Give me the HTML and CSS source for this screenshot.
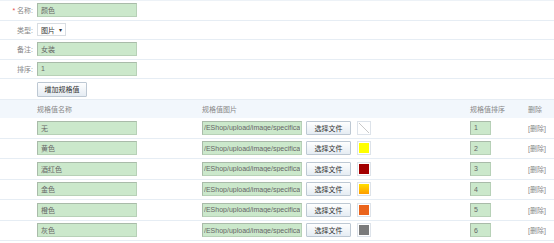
FILE: index.html
```html
<!DOCTYPE html>
<html lang="zh-CN">
<head>
    <meta charset="UTF-8">
    <title>编辑规格</title>
    <link rel="stylesheet" href="styles.css">
</head>
<body>

<div class="form">
    <div class="form-row">
        <label class="form-label"><span class="required">*</span> 名称:</label>
        <input class="text-input" type="text" value="颜色">
    </div>
    <div class="form-row">
        <label class="form-label">类型:</label>
        <span class="select">图片 <span class="caret">&#9662;</span></span>
    </div>
    <div class="form-row">
        <label class="form-label">备注:</label>
        <input class="text-input" type="text" value="女装">
    </div>
    <div class="form-row">
        <label class="form-label">排序:</label>
        <input class="text-input" type="text" value="1">
    </div>
    <div class="form-row button-row">
        <span class="form-label"></span>
        <button class="btn" type="button">增加规格值</button>
    </div>
</div>

<table class="spec-table">
    <colgroup>
        <col class="w-name">
        <col class="w-image">
        <col class="w-sort">
        <col class="w-del">
    </colgroup>
    <thead>
        <tr>
            <th class="col-name">规格值名称</th>
            <th>规格值图片</th>
            <th>规格值排序</th>
            <th>删除</th>
        </tr>
    </thead>
    <tbody>
        <tr>
            <td class="col-name"><input class="text-input" type="text" value="无"></td>
            <td>
                <div class="image-cell">
                    <input class="path-input" type="text" value="/EShop/upload/image/specification/none.gif">
                    <button class="file-btn" type="button">选择文件</button>
                    <span class="swatch"><span class="swatch-color swatch-none"></span></span>
                </div>
            </td>
            <td><input class="sort-input" type="text" value="1"></td>
            <td><span class="del-link">[删除]</span></td>
        </tr>
        <tr>
            <td class="col-name"><input class="text-input" type="text" value="黄色"></td>
            <td>
                <div class="image-cell">
                    <input class="path-input" type="text" value="/EShop/upload/image/specification/yellow.gif">
                    <button class="file-btn" type="button">选择文件</button>
                    <span class="swatch"><span class="swatch-color" style="background:#ffff00"></span></span>
                </div>
            </td>
            <td><input class="sort-input" type="text" value="2"></td>
            <td><span class="del-link">[删除]</span></td>
        </tr>
        <tr>
            <td class="col-name"><input class="text-input" type="text" value="酒红色"></td>
            <td>
                <div class="image-cell">
                    <input class="path-input" type="text" value="/EShop/upload/image/specification/wine.gif">
                    <button class="file-btn" type="button">选择文件</button>
                    <span class="swatch"><span class="swatch-color" style="background:#a30000"></span></span>
                </div>
            </td>
            <td><input class="sort-input" type="text" value="3"></td>
            <td><span class="del-link">[删除]</span></td>
        </tr>
        <tr>
            <td class="col-name"><input class="text-input" type="text" value="金色"></td>
            <td>
                <div class="image-cell">
                    <input class="path-input" type="text" value="/EShop/upload/image/specification/gold.gif">
                    <button class="file-btn" type="button">选择文件</button>
                    <span class="swatch"><span class="swatch-color swatch-gold"></span></span>
                </div>
            </td>
            <td><input class="sort-input" type="text" value="4"></td>
            <td><span class="del-link">[删除]</span></td>
        </tr>
        <tr>
            <td class="col-name"><input class="text-input" type="text" value="橙色"></td>
            <td>
                <div class="image-cell">
                    <input class="path-input" type="text" value="/EShop/upload/image/specification/orange.gif">
                    <button class="file-btn" type="button">选择文件</button>
                    <span class="swatch"><span class="swatch-color" style="background:#ea641c"></span></span>
                </div>
            </td>
            <td><input class="sort-input" type="text" value="5"></td>
            <td><span class="del-link">[删除]</span></td>
        </tr>
        <tr>
            <td class="col-name"><input class="text-input" type="text" value="灰色"></td>
            <td>
                <div class="image-cell">
                    <input class="path-input" type="text" value="/EShop/upload/image/specification/gray.gif">
                    <button class="file-btn" type="button">选择文件</button>
                    <span class="swatch"><span class="swatch-color" style="background:#7b7b7b"></span></span>
                </div>
            </td>
            <td><input class="sort-input" type="text" value="6"></td>
            <td><span class="del-link">[删除]</span></td>
        </tr>
    </tbody>
</table>

</body>
</html>
```

FILE: styles.css
```css
body {
    margin: 0;
    padding: 0;
    background-color: #fff;
    font-family: Arial, "Liberation Sans", "Noto Sans CJK SC", sans-serif;
    font-size: 7px;
    color: #666;
}
.form {
    border-top: 1px solid #edf2f7;
}
.form-row {
    display: flex;
    align-items: center;
    height: 18.5px;
    border-bottom: 1px solid #e6edf4;
}
.button-row {
    height: 20px;
}
.form-label {
    width: 33px;
    margin-right: 4px;
    text-align: right;
    color: #888;
    flex-shrink: 0;
}
.required {
    color: #e5504b;
}
.text-input,
.path-input,
.sort-input {
    box-sizing: border-box;
    height: 14px;
    margin: 0;
    padding: 0 3px;
    font: inherit;
    color: #666;
    background-color: #cbe8cb;
    border: 1px solid #b7d1b7;
    border-top-color: #a9bba9;
    border-left-color: #a9bba9;
    outline: none;
}
.text-input {
    width: 100px;
}
.select {
    box-sizing: border-box;
    display: inline-flex;
    align-items: center;
    justify-content: space-between;
    width: 29px;
    height: 13px;
    padding: 0 3px;
    border: 1px solid #d8dde2;
    background-color: #fff;
    color: #333;
}
.caret {
    font-size: 6px;
}
.btn,
.file-btn {
    box-sizing: border-box;
    margin: 0;
    padding: 0;
    font: inherit;
    color: #333;
    background: linear-gradient(#fefefe, #e5ecf3);
    border: 1px solid #bdc8d3;
    border-radius: 1px;
}
.btn {
    width: 50px;
    height: 15px;
}
.spec-table {
    width: 554px;
    table-layout: fixed;
    border-collapse: collapse;
}
.w-name {
    width: 202px;
}
.w-image {
    width: 268px;
}
.w-sort {
    width: 58px;
}
.w-del {
    width: 26px;
}
.spec-table th {
    height: 18px;
    padding: 0;
    font-weight: normal;
    text-align: left;
    white-space: nowrap;
    color: #888;
    background-color: #f2f7fc;
}
.spec-table td {
    height: 19.5px;
    padding: 0;
    white-space: nowrap;
    border-bottom: 1px solid #e6edf4;
}
.spec-table .col-name {
    padding-left: 37px;
}
.image-cell {
    display: flex;
    align-items: center;
}
.path-input {
    width: 100px;
    padding: 0 1px;
}
.file-btn {
    width: 45px;
    height: 14px;
    margin-left: 4px;
}
.swatch {
    box-sizing: border-box;
    display: inline-block;
    width: 14px;
    height: 14px;
    margin-left: 6px;
    padding: 1px;
    border: 1px solid #dde3ea;
    background-color: #fff;
}
.swatch-color {
    display: block;
    width: 100%;
    height: 100%;
}
.swatch-none {
    background: linear-gradient(to bottom left, transparent 46%, #c8c8c8 50%, transparent 54%);
}
.swatch-gold {
    background: linear-gradient(#ffe000, #ff9c00);
}
.sort-input {
    width: 21px;
}
.del-link {
    color: #888;
    cursor: pointer;
}
```
